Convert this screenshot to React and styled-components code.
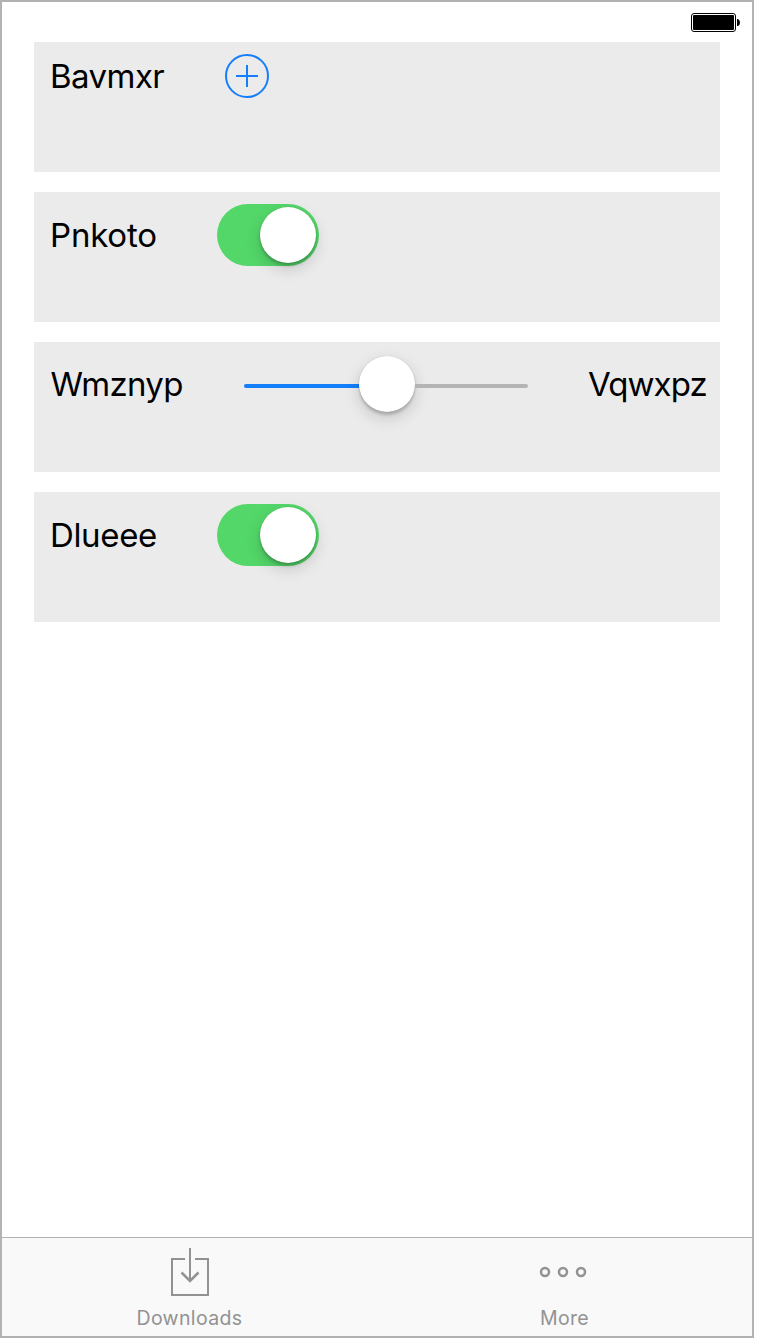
import React from "react";
import styled, { createGlobalStyle } from "styled-components";

const GlobalStyle = createGlobalStyle`
  * { box-sizing: border-box; }
  body {
    margin: 0;
    background: #fff;
    font-family: Inter, "Liberation Sans", sans-serif;
  }
`;

const Screen = styled.div`
  display: flex;
  flex-direction: column;
  width: 754px;
  height: 1338px;
  border: 2px solid #b2b2b2;
  background: #fff;
`;

const StatusBar = styled.header`
  display: flex;
  justify-content: flex-end;
  height: 40px;
  padding: 11px 12px 0 0;
`;

const CardList = styled.main`
  flex: 1;
  display: flex;
  flex-direction: column;
  gap: 20px;
  padding: 0 32px;
`;

const Card = styled.section`
  height: 130px;
  padding: 12px 0 0 16px;
  background: #ebebeb;
`;

const Row = styled.div`
  display: flex;
  align-items: center;
  height: ${(p) => p.$height}px;
`;

const Label = styled.span`
  width: ${(p) => p.$width || 167}px;
  flex: none;
  padding-left: ${(p) => p.$inset || 0}px;
  font-size: 33px;
  line-height: 40px;
  letter-spacing: ${(p) => p.$tracking || 0}px;
  color: #000;
  white-space: nowrap;
`;

const AddButton = styled.button`
  display: flex;
  margin: 0 0 0 8px;
  padding: 0;
  border: 0;
  background: none;
`;

const Toggle = styled.button`
  display: flex;
  justify-content: flex-end;
  align-items: center;
  width: 102px;
  height: 62px;
  margin: 0;
  padding: 0 3px;
  border: 0;
  border-radius: 31px;
  background: #53d769;
`;

const Knob = styled.span`
  flex: none;
  width: 56px;
  height: 56px;
  border-radius: 50%;
  background: #fff;
  box-shadow: 0 0 1px rgba(0, 0, 0, 0.22), 0 3px 3px rgba(0, 0, 0, 0.18),
    0 6px 16px rgba(0, 0, 0, 0.16);
`;

const Slider = styled.div`
  display: flex;
  align-items: center;
  width: 284px;
  margin: 0 60px 0 27px;
`;

const Track = styled.span`
  flex: ${(p) => (p.$filled ? "0 0 115px" : "1")};
  height: 4px;
  margin-top: 4px;
  border-radius: ${(p) => (p.$filled ? "2px 0 0 2px" : "0 2px 2px 0")};
  background: ${(p) => (p.$filled ? "#147efb" : "#b4b4b4")};
`;

const TabBar = styled.nav`
  display: flex;
  height: 99px;
  border-top: 1px solid #b2b2b2;
  background: #f9f9f9;
`;

const Tab = styled.a`
  flex: 1;
  display: flex;
  flex-direction: column;
  align-items: center;
  padding-top: 9px;
  color: #929292;
  font-size: 19.5px;
  line-height: 24px;
  letter-spacing: ${(p) => p.$tracking}px;
`;

const TabIcon = styled.svg`
  display: block;
  margin-bottom: 9px;
`;

function BatteryIcon() {
  return (
    <svg width="49" height="19" viewBox="0 0 49 19">
      <rect x="0.5" y="0.5" width="44" height="18" rx="2.5" fill="none" stroke="#000" />
      <rect x="2" y="2" width="41" height="15" rx="1" />
      <path d="M46 6h1q2 1 2 3.5T47 13h-1z" />
    </svg>
  );
}

function Switch() {
  return (
    <Toggle role="switch" aria-checked="true">
      <Knob />
    </Toggle>
  );
}

export default function App() {
  return (
    <>
      <GlobalStyle />
      <Screen>
        <StatusBar>
          <BatteryIcon />
        </StatusBar>
        <CardList>
          <Card>
            <Row $height={44}>
              <Label $tracking={-0.55}>Bavmxr</Label>
              <AddButton>
                <svg width="44" height="44" fill="none" stroke="#147efb" strokeWidth="2">
                  <circle cx="22" cy="22" r="21" />
                  <path d="M11 22h22M22 11v22" />
                </svg>
              </AddButton>
            </Row>
          </Card>
          <Card>
            <Row $height={62}>
              <Label $tracking={-0.2}>Pnkoto</Label>
              <Switch />
            </Row>
          </Card>
          <Card>
            <Row $height={60}>
              <Label $tracking={-0.7} $inset={0.6}>Wmznyp</Label>
              <Slider>
                <Track $filled />
                <Knob />
                <Track />
              </Slider>
              <Label $width={120} $tracking={-0.9}>Vqwxpz</Label>
            </Row>
          </Card>
          <Card>
            <Row $height={62}>
              <Label $tracking={-0.35}>Dlueee</Label>
              <Switch />
            </Row>
          </Card>
        </CardList>
        <TabBar>
          <Tab $tracking={0.38}>
            <TabIcon width="40" height="50" fill="none" stroke="#929292" strokeWidth="2">
              <path d="M15 12H2v36h36V12H25M20 1v32" />
              <path d="M11.500 25.500L20 34l8.500-8.500" strokeWidth="2.500" />
            </TabIcon>
            Downloads
          </Tab>
          <Tab $tracking={0.3}>
            <TabIcon width="52" height="50" fill="none" stroke="#929292" strokeWidth="2.500">
              <circle cx="6" cy="25" r="4" />
              <circle cx="24" cy="25" r="4" />
              <circle cx="42" cy="25" r="4" />
            </TabIcon>
            More
          </Tab>
        </TabBar>
      </Screen>
    </>
  );
}
